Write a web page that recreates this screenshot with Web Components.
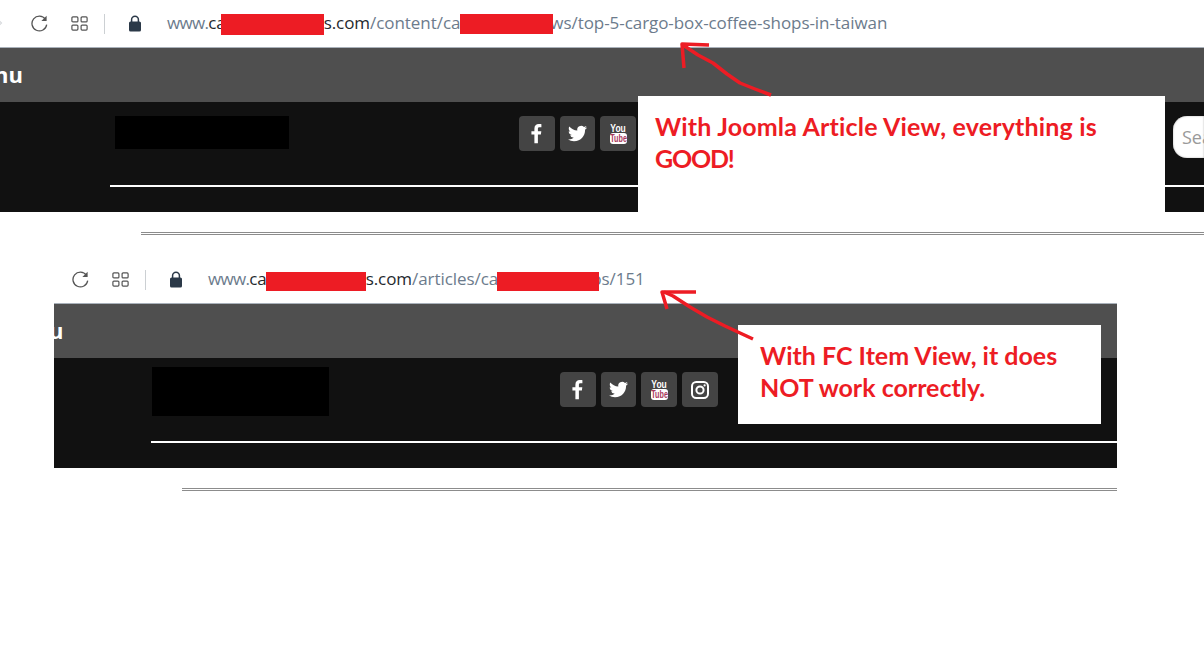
<!DOCTYPE html>
<html lang="en">
<head>
<meta charset="utf-8">
<title>Article view comparison</title>
<style>
	html, body { margin: 0; background: #fff; }
	body { width: 1204px; height: 648px; overflow: hidden; position: relative; font-family: "Open Sans", sans-serif; }
	.www { letter-spacing: -0.7px; }
</style>
</head>
<body>
	<browser-bar start="31" forward>
		<span class="www">www.</span><span class="host">ca<redact-mark w="103" h="21" before="-5"></redact-mark>s.com</span>/content/ca<redact-mark w="93" h="20" after="-3"></redact-mark>ws/top-5-cargo-box-coffee-shops-in-taiwan
	</browser-bar>
	<site-header menu="nu" menu-shift="-6" band-top="14" logo-left="115" logo-w="174" logo-h="33" logo-gap="230" social-top="0" row-h="42" rule-gap="27" rule-left="110" search>
	</site-header>
	<double-rule left="141" right="0" top="20"></double-rule>

	<browser-bar start="72" top="21">
		<span class="www">www.</span><span class="host">ca<redact-mark w="100" h="19" before="-1" drop="1"></redact-mark>s.com</span>/articles/ca<redact-mark w="102" h="19" before="-1" after="-8" drop="1"></redact-mark>ps/151
	</browser-bar>
	<site-header menu="u" menu-shift="-5" left="54" right="87" band-top="9" logo-left="98" logo-w="177" logo-h="49" logo-gap="231" social-top="5" row-h="49" rule-gap="25" rule-left="97">
	</site-header>
	<double-rule left="182" right="87" top="20"></double-rule>

	<call-out x="638" y="96" w="527" h="116" pad-left="17" style="letter-spacing:.18px">With Joomla Article View, everything is<br><span style="letter-spacing:-1.2px">GOOD!</span></call-out>
	<call-out x="738" y="325" w="363" h="99" pad-left="22">With FC Item View, it does<br>NOT work correctly.</call-out>
	<arrow-marks></arrow-marks>

<script>
class RedactMark extends HTMLElement {
	constructor() {
		super()
		this.attachShadow({ mode: 'open' })
		this.shadowRoot.innerHTML = `
			<style>
				:host {
					display: inline-block;
					position: relative;
					z-index: 1;
					vertical-align: middle;
					background: #ed1c24;
				}
			</style>
		`
	}

	connectedCallback() {
		this.style.width = this.getAttribute('w') + 'px'
		this.style.height = this.getAttribute('h') + 'px'
		this.style.marginLeft = (this.getAttribute('before') || 0) + 'px'
		this.style.marginRight = (this.getAttribute('after') || 0) + 'px'
		this.style.marginTop = (this.getAttribute('drop') || -1) + 'px'
	}
}

class BrowserBar extends HTMLElement {
	constructor() {
		super()
		this.attachShadow({ mode: 'open' })
		this.shadowRoot.innerHTML = `
			<style>
				:host {
					display: flex;
					align-items: center;
					height: 47px;
					position: relative;
					background: #fff;
				}
				.reload { width: 17px; height: 17px; margin-right: 23px; }
				.apps { width: 17px; height: 15px; margin-right: 16px; }
				.divider { width: 1px; height: 20px; background: #ccd0d3; margin-right: 24px; }
				.lock { width: 12px; height: 17px; margin-right: 26px; }
				.url {
					font: 17px/21px "Open Sans", sans-serif;
					letter-spacing: -0.06px;
					color: #6c7b8c;
					white-space: nowrap;
				}
				::slotted(.host) { color: #24292e; }
				.forward { position: absolute; left: -3px; top: 19px; width: 6px; height: 8px; display: none; }
				.forward.on { display: block; }
			</style>
			<svg class="forward" viewBox="0 0 6 8"><path d="M1 0.5 4.5 4 1 7.5" fill="none" stroke="#d6d9dc" stroke-width="1.2"/></svg>
			<svg class="reload" viewBox="0 0 17 17">
				<path d="M14.4 4.2A7.4 7.4 0 1 0 15.7 9.6" fill="none" stroke="#555" stroke-width="1.3"/>
				<path d="M15.6 0.8V6h-5.2z" fill="#555"/>
			</svg>
			<svg class="apps" viewBox="0 0 17 15" fill="none" stroke="#555" stroke-width="1.2">
				<rect x="0.9" y="0.9" width="6" height="5" rx="1"/>
				<rect x="10.1" y="0.9" width="6" height="5" rx="1"/>
				<rect x="0.9" y="9.1" width="6" height="5" rx="1"/>
				<rect x="10.1" y="9.1" width="6" height="5" rx="1"/>
			</svg>
			<span class="divider"></span>
			<svg class="lock" viewBox="0 0 12 17">
				<path d="M2.6 8V4.6a3.4 3.4 0 0 1 6.8 0V8" fill="none" stroke="#2b3948" stroke-width="1.5"/>
				<rect y="6.5" width="12" height="10" rx="1.6" fill="#2b3948"/>
			</svg>
			<span class="url"><slot></slot></span>
		`
	}

	connectedCallback() {
		this.style.paddingLeft = this.getAttribute('start') + 'px'
		if (this.hasAttribute('top')) this.style.marginTop = this.getAttribute('top') + 'px'
		if (this.hasAttribute('forward')) this.shadowRoot.querySelector('.forward').classList.add('on')
	}
}

class SocialLinks extends HTMLElement {
	constructor() {
		super()
		this.attachShadow({ mode: 'open' })
		this.shadowRoot.innerHTML = `
			<style>
				:host { display: flex; gap: 5px; flex: none; }
				a {
					width: 35.67px;
					height: 35px;
					background: #444;
					border-radius: 4px;
					display: flex;
					align-items: center;
					justify-content: center;
				}
				svg { display: block; }
				.yt { display: flex; flex-direction: column; align-items: center; font-family: "Liberation Sans", sans-serif; font-weight: 700; }
				.you { color: #fff; font-size: 10px; line-height: 9px; transform: scale(.85, 1.1); }
				.tube {
					background: #fff;
					color: #a8385c;
					font-size: 10px;
					line-height: 11px;
					width: 17px;
					border-radius: 3px;
					display: flex;
					justify-content: center;
				}
				.tube span { transform: scaleX(.72); }
			</style>
			<a><svg width="21" height="21" viewBox="0 0 24 24" fill="#fff"><path d="M13.6 23V13.2h3.4l.5-3.9h-3.9V6.8c0-1.1.3-1.9 1.9-1.9h2.1V1.4c-.4-.05-1.6-.15-3-.15-3 0-5 1.8-5 5.2v2.9H6.2v3.9h3.4V23z"/></svg></a>
			<a><svg width="19" height="19" viewBox="0 0 24 24" fill="#fff"><path d="M23.953 4.57a10 10 0 01-2.825.775 4.958 4.958 0 002.163-2.723c-.951.555-2.005.959-3.127 1.184a4.92 4.92 0 00-8.384 4.482C7.69 8.095 4.067 6.13 1.64 3.162a4.822 4.822 0 00-.666 2.475c0 1.71.87 3.213 2.188 4.096a4.904 4.904 0 01-2.228-.616v.06a4.923 4.923 0 003.946 4.827 4.996 4.996 0 01-2.212.085 4.936 4.936 0 004.604 3.417 9.867 9.867 0 01-6.102 2.105c-.39 0-.779-.023-1.17-.067a13.995 13.995 0 007.557 2.209c9.053 0 13.998-7.496 13.998-13.985 0-.21 0-.42-.015-.63A9.935 9.935 0 0024 4.59z"/></svg></a>
			<a><span class="yt"><span class="you">You</span><span class="tube"><span>Tube</span></span></span></a>
			<a><svg width="18" height="18" viewBox="0 0 18 18" fill="none" stroke="#fff"><rect x="1" y="1" width="16" height="16" rx="4.2" stroke-width="2"/><circle cx="9" cy="9" r="3.6" stroke-width="2"/><circle cx="13.6" cy="4.4" r="1.1" fill="#fff" stroke="none"/></svg></a>
		`
	}
}

class SiteHeader extends HTMLElement {
	constructor() {
		super()
		this.attachShadow({ mode: 'open' })
		this.shadowRoot.innerHTML = `
			<style>
				:host { display: block; border-top: 1px solid #a9b1ba; }
				.menu {
					height: 54px;
					background: #4f4f4f;
					color: #fff;
					font: 700 22px/53px "Open Sans", sans-serif;
					overflow: hidden;
				}
				.label { display: inline-block; }
				.band { background: #111; height: 110px; box-sizing: border-box; overflow: hidden; }
				.row { display: flex; align-items: flex-start; }
				.logo { background: #000; flex: none; }
				.search {
					margin-left: auto;
					width: 31px;
					height: 42px;
					box-sizing: border-box;
					padding-left: 9px;
					background: #fff;
					border-radius: 14px 0 0 14px;
					box-shadow: inset 0 0 2px #aaa;
					color: #9a9a9a;
					font: 18px/42px "Open Sans", sans-serif;
					overflow: hidden;
					white-space: nowrap;
				}
				.rule { height: 2px; background: #fff; }
			</style>
			<div class="menu"><span class="label"></span></div>
			<div class="band">
				<div class="row">
					<div class="logo"></div>
					<social-links></social-links>
					<div class="search" hidden>Sea</div>
				</div>
				<div class="rule"></div>
			</div>
		`
	}

	connectedCallback() {
		const num = (name) => (this.getAttribute(name) || 0) + 'px'
		const root = this.shadowRoot
		this.style.marginLeft = num('left')
		this.style.marginRight = num('right')

		const label = root.querySelector('.label')
		label.textContent = this.getAttribute('menu')
		label.style.marginLeft = num('menu-shift')

		root.querySelector('.band').style.paddingTop = num('band-top')
		const row = root.querySelector('.row')
		row.style.height = num('row-h')
		row.style.paddingLeft = num('logo-left')

		const logo = root.querySelector('.logo')
		logo.style.width = num('logo-w')
		logo.style.height = num('logo-h')

		const social = root.querySelector('social-links')
		social.style.marginLeft = num('logo-gap')
		social.style.marginTop = num('social-top')

		const rule = root.querySelector('.rule')
		rule.style.marginTop = num('rule-gap')
		rule.style.marginLeft = num('rule-left')

		if (this.hasAttribute('search')) root.querySelector('.search').removeAttribute('hidden')
	}
}

class DoubleRule extends HTMLElement {
	constructor() {
		super()
		this.attachShadow({ mode: 'open' })
		this.shadowRoot.innerHTML = `
			<style>
				:host {
					display: block;
					height: 1px;
					border-top: 1px solid #8c8c8c;
					border-bottom: 1px solid #8c8c8c;
				}
			</style>
		`
	}

	connectedCallback() {
		this.style.marginLeft = this.getAttribute('left') + 'px'
		this.style.marginRight = this.getAttribute('right') + 'px'
		this.style.marginTop = this.getAttribute('top') + 'px'
	}
}

class CallOut extends HTMLElement {
	constructor() {
		super()
		this.attachShadow({ mode: 'open' })
		this.shadowRoot.innerHTML = `
			<style>
				:host {
					display: block;
					position: absolute;
					box-sizing: border-box;
					background: #fff;
					color: #ed1c24;
					font: 700 25px/32px Lato, "Liberation Sans", sans-serif;
					padding-top: 14px;
				}
			</style>
			<slot></slot>
		`
	}

	connectedCallback() {
		this.style.left = this.getAttribute('x') + 'px'
		this.style.top = this.getAttribute('y') + 'px'
		this.style.width = this.getAttribute('w') + 'px'
		this.style.height = this.getAttribute('h') + 'px'
		this.style.paddingLeft = this.getAttribute('pad-left') + 'px'
	}
}

class ArrowMarks extends HTMLElement {
	constructor() {
		super()
		this.attachShadow({ mode: 'open' })
		this.shadowRoot.innerHTML = `
			<style>
				:host { display: block; position: absolute; left: 0; top: 0; pointer-events: none; }
				svg { display: block; }
				path { fill: none; stroke: #ed1c24; stroke-width: 3.5; stroke-linejoin: round; }
			</style>
			<svg width="1204" height="648">
				<path d="M709 45 682 44 684 68"/>
				<path d="M683 45 698 55 713 63 727 74 740 83 755 89 771 95"/>
				<path d="M696 292 662 292 667 309"/>
				<path d="M664 292 673 296 690 307 707 317 725 326 740 333 753 339"/>
			</svg>
		`
	}
}

customElements.define('redact-mark', RedactMark)
customElements.define('browser-bar', BrowserBar)
customElements.define('social-links', SocialLinks)
customElements.define('site-header', SiteHeader)
customElements.define('double-rule', DoubleRule)
customElements.define('call-out', CallOut)
customElements.define('arrow-marks', ArrowMarks)
</script>
</body>
</html>
